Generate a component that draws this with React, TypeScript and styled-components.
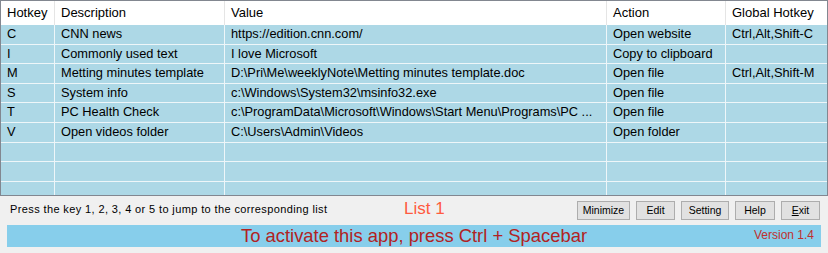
import React from "react";
import styled, { createGlobalStyle } from "styled-components";

const Global = createGlobalStyle`
  html, body { margin: 0; padding: 0; background: #f0f0f0; }
  body { font-family: "Liberation Sans", Arial, sans-serif; }
  * { box-sizing: border-box; }
`;

const Window = styled.div`
  width: 828px;
  height: 253px;
  background: #f0f0f0;
  display: flex;
  flex-direction: column;
  overflow: hidden;
`;

const Table = styled.div`
  width: 828px;
  height: 196px;
  border: 1px solid #828790;
  background: #add8e6;
  overflow: hidden;
  display: flex;
  flex-direction: column;
`;

const COLS = "54px 170px 382px 119px 1fr";

const HeaderRow = styled.div`
  display: grid;
  grid-template-columns: ${COLS};
  height: 24px;
  flex: none;
  background: #ffffff;
`;

const HeaderCell = styled.div<{ $last?: boolean }>`
  padding-left: 6px;
  font-size: 13px;
  line-height: 24px;
  color: #000;
  white-space: nowrap;
  overflow: hidden;
  border-right: ${(p) => (p.$last ? "none" : "1px solid #e5e5e5")};
`;

const Row = styled.div`
  display: grid;
  grid-template-columns: ${COLS};
  height: 19.6px;
  flex: none;
  border-bottom: 1px solid #eef6f9;
`;

const Cell = styled.div<{ $last?: boolean }>`
  padding-left: 6px;
  font-size: 12.8px;
  line-height: 18.6px;
  color: #000;
  white-space: nowrap;
  overflow: hidden;
  border-right: ${(p) => (p.$last ? "none" : "1px solid #eef6f9")};
`;

const StatusBar = styled.div`
  height: 29px;
  display: flex;
  align-items: center;
  padding: 0 8px 0 10px;
  flex: none;
`;

const Hint = styled.div`
  width: 394px;
  font-size: 11px;
  letter-spacing: 0.38px;
  color: #000;
  margin-top: -3px;
  white-space: nowrap;
`;

const ListLabel = styled.div`
  font-size: 17px;
  color: #ff5a40;
  margin-top: -3px;
`;

const Buttons = styled.div`
  margin-left: auto;
  display: flex;
  gap: 6px;
`;

const Button = styled.button<{ $w: number }>`
  width: ${(p) => p.$w}px;
  height: 19px;
  padding: 0;
  background: #e1e1e1;
  border: 1px solid #adadad;
  font-family: "Liberation Sans", Arial, sans-serif;
  font-size: 10.5px;
  color: #000;
  text-align: center;
  line-height: 17px;
  cursor: default;
`;

const Banner = styled.div`
  margin: 0 7px;
  height: 22px;
  background: #87ceeb;
  display: grid;
  grid-template-columns: 1fr auto 1fr;
  align-items: center;
  flex: none;
`;

const BannerText = styled.div`
  grid-column: 2;
  font-size: 18.4px;
  color: #b22222;
  white-space: nowrap;
  line-height: 22px;
`;

const Version = styled.div`
  grid-column: 3;
  justify-self: end;
  padding-right: 7px;
  font-size: 12px;
  color: #c0302e;
  margin-top: -3px;
`;

type Entry = [string, string, string, string, string];

const rows: Entry[] = [
  ["C", "CNN news", "https://edition.cnn.com/", "Open website", "Ctrl,Alt,Shift-C"],
  ["I", "Commonly used text", "I love Microsoft", "Copy to clipboard", ""],
  [
    "M",
    "Metting minutes template",
    "D:\\Pri\\Me\\weeklyNote\\Metting minutes template.doc",
    "Open file",
    "Ctrl,Alt,Shift-M",
  ],
  ["S", "System info", "c:\\Windows\\System32\\msinfo32.exe", "Open file", ""],
  [
    "T",
    "PC Health Check",
    "c:\\ProgramData\\Microsoft\\Windows\\Start Menu\\Programs\\PC ...",
    "Open file",
    "",
  ],
  ["V", "Open videos folder", "C:\\Users\\Admin\\Videos", "Open folder", ""],
  ["", "", "", "", ""],
  ["", "", "", "", ""],
  ["", "", "", "", ""],
];

const headers = ["Hotkey", "Description", "Value", "Action", "Global Hotkey"];

const buttons: { label: React.ReactNode; w: number }[] = [
  { label: "Minimize", w: 53 },
  { label: "Edit", w: 39 },
  { label: "Setting", w: 48 },
  { label: "Help", w: 40 },
  {
    label: (
      <>
        <u>E</u>xit
      </>
    ),
    w: 39,
  },
];

export default function App() {
  return (
    <>
      <Global />
      <Window>
        <Table>
          <HeaderRow>
            {headers.map((h, i) => (
              <HeaderCell key={h} $last={i === headers.length - 1}>
                {h}
              </HeaderCell>
            ))}
          </HeaderRow>
          {rows.map((r, ri) => (
            <Row key={ri}>
              {r.map((c, ci) => (
                <Cell key={ci} $last={ci === r.length - 1}>
                  {c}
                </Cell>
              ))}
            </Row>
          ))}
        </Table>
        <StatusBar>
          <Hint>Press the key 1, 2, 3, 4 or 5 to jump to the corresponding list</Hint>
          <ListLabel>List 1</ListLabel>
          <Buttons>
            {buttons.map((b, i) => (
              <Button key={i} $w={b.w}>
                {b.label}
              </Button>
            ))}
          </Buttons>
        </StatusBar>
        <Banner>
          <BannerText>To activate this app, press Ctrl + Spacebar</BannerText>
          <Version>Version 1.4</Version>
        </Banner>
      </Window>
    </>
  );
}
